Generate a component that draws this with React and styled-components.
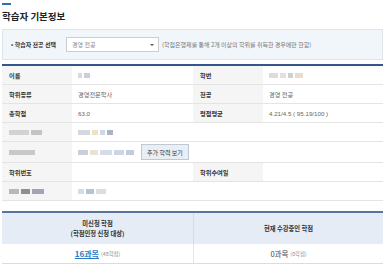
import React from "react";
import styled, { createGlobalStyle } from "styled-components";

const GlobalStyle = createGlobalStyle`
  html, body {
    margin: 0;
    padding: 0;
    background: #fff;
  }
  body {
    font-family: "Noto Sans CJK KR", "Noto Sans", sans-serif;
    color: #333;
  }
`;

const Page = styled.div`
  width: 381px;
  padding: 3px 3px 0 2px;
`;

const TitleMark = styled.div`
  width: 9px;
  height: 2px;
  background: #2f6fb4;
`;

const Title = styled.h1`
  margin: 5px 0 0;
  font-size: 9.5px;
  line-height: 12px;
  font-weight: 700;
  color: #222;
`;

const FilterBox = styled.div`
  margin-top: 7px;
  height: 29px;
  display: flex;
  align-items: center;
  padding-left: 8px;
  background: #f1f6fb;
  border: 1px solid #dde4ec;
`;

const FilterLabel = styled.span`
  font-size: 6px;
  font-weight: 700;
  color: #333;
  width: 55px;
  white-space: nowrap;
`;

const Select = styled.div`
  width: 93px;
  height: 15px;
  box-sizing: border-box;
  display: flex;
  align-items: center;
  justify-content: space-between;
  padding: 0 4px 0 5px;
  background: #fff;
  border: 1px solid #c9ced4;
  font-size: 6px;
  color: #888;
`;

const Arrow = styled.span`
  width: 0;
  height: 0;
  border-left: 2px solid transparent;
  border-right: 2px solid transparent;
  border-top: 2px solid #555;
`;

const Hint = styled.span`
  margin-left: 3px;
  font-size: 6px;
  color: #777;
  white-space: nowrap;
`;

const InfoTable = styled.div`
  margin-top: 4px;
  display: grid;
  grid-template-columns: 70px 121px 70px 120px;
  border-top: 2px solid #34568a;
`;

const Cell = styled.div`
  height: ${(p) => (p.$tall ? 20 : 18)}px;
  display: flex;
  align-items: center;
  gap: 4px;
  padding-left: ${(p) => (p.$label ? 7 : 6)}px;
  border-bottom: 1px solid #e4e4e4;
  background: ${(p) => (p.$label ? "#f5f5f5" : "#fff")};
  grid-column: ${(p) => (p.$span ? "span 3" : "auto")};
  font-size: 6.2px;
  font-weight: ${(p) => (p.$label ? 700 : 400)};
  color: ${(p) => (p.$label ? "#333" : "#666")};
  white-space: nowrap;
`;

const Num = styled.span`
  font-family: "Liberation Sans", "Noto Sans CJK KR", sans-serif;
`;

const MaskRow = styled.span`
  display: flex;
  gap: 2px;
  filter: blur(0.7px);
`;

const MaskBlock = styled.span`
  display: block;
  width: ${(p) => p.$w}px;
  height: 5px;
  background: ${(p) => p.$c};
`;

const Button = styled.button`
  height: 16px;
  padding: 0 5px;
  margin-left: 3px;
  background: #e9eef4;
  border: 1px solid #bfc9d4;
  font-family: inherit;
  font-size: 6px;
  color: #333;
  cursor: pointer;
`;

const Summary = styled.div`
  margin-top: 10px;
  display: grid;
  grid-template-columns: 191px 190px;
  border-top: 2px solid #58749d;
`;

const SumHead = styled.div`
  height: 31px;
  display: flex;
  flex-direction: column;
  align-items: center;
  justify-content: center;
  background: #e5ecf5;
  border-left: ${(p) => (p.$divide ? "1px solid #d3dbe6" : "none")};
  font-size: 6.3px;
  line-height: 10px;
  font-weight: 700;
  color: #333;
`;

const SumCell = styled.div`
  height: 19px;
  display: flex;
  align-items: center;
  justify-content: center;
  gap: 2px;
  border-bottom: 1px solid #dcdcdc;
  border-left: ${(p) => (p.$divide ? "1px solid #e6e6e6" : "none")};
`;

const CountLink = styled.a`
  font-size: 8px;
  font-weight: 700;
  color: #2a79c6;
  text-decoration: underline;
`;

const Count = styled.span`
  font-size: 7.5px;
  color: #444;
`;

const Credit = styled.span`
  font-size: 5.3px;
  color: #888;
`;

const Mask = ({ blocks }) => (
  <MaskRow>
    {blocks.map(([w, c], i) => (
      <MaskBlock key={i} $w={w} $c={c} />
    ))}
  </MaskRow>
);

export default function App() {
  return (
    <Page>
      <GlobalStyle />
      <TitleMark />
      <Title>학습자 기본정보</Title>

      <FilterBox>
        <FilterLabel>• 학습자 전공 선택</FilterLabel>
        <Select>
          경영 전공
          <Arrow />
        </Select>
        <Hint>(학점은행제를 통해 2개 이상의 학위를 취득한 경우에만 한함)</Hint>
      </FilterBox>

      <InfoTable>
        <Cell $label>이름</Cell>
        <Cell>
          <Mask blocks={[[4, "#d9d9d9"], [6, "#c9ced8"]]} />
        </Cell>
        <Cell $label>학번</Cell>
        <Cell>
          <Mask blocks={[[9, "#dcdcdc"], [6, "#e6e0dc"], [5, "#cfcfcf"], [8, "#e7dcd2"]]} />
        </Cell>

        <Cell $label>학위종류</Cell>
        <Cell>경영전문학사</Cell>
        <Cell $label>전공</Cell>
        <Cell>경영 전공</Cell>

        <Cell $label>총학점</Cell>
        <Cell>
          <Num>63.0</Num>
        </Cell>
        <Cell $label>평점평균</Cell>
        <Cell>
          <Num>4.21/4.5 ( 95.19/100 )</Num>
        </Cell>

        <Cell $label>
          <Mask blocks={[[20, "#d2d2d2"], [11, "#c4c4c4"]]} />
        </Cell>
        <Cell $span>
          <Mask blocks={[[12, "#d5d8de"], [6, "#efe2c4"], [5, "#cfd8e6"], [6, "#a9b4c6"]]} />
        </Cell>

        <Cell $label $tall>
          <Mask blocks={[[26, "#c8c8c8"]]} />
        </Cell>
        <Cell $span $tall>
          <Mask blocks={[[10, "#c9ced8"], [8, "#e9e3d2"], [12, "#d6dde9"], [10, "#cdd6e4"], [8, "#c1ccdc"]]} />
          <Button>추가 학력 보기</Button>
        </Cell>

        <Cell $label>학위번호</Cell>
        <Cell />
        <Cell $label>학위수여일</Cell>
        <Cell />

        <Cell $label>
          <Mask blocks={[[10, "#b8b8b8"], [9, "#8f8f8f"], [12, "#a0a6b2"]]} />
        </Cell>
        <Cell $span>
          <Mask blocks={[[6, "#d7dbe2"], [8, "#b6c2d6"], [10, "#d9dde6"]]} />
        </Cell>
      </InfoTable>

      <Summary>
        <SumHead>
          <span>미신청 학점</span>
          <span>(학점인정 신청 대상)</span>
        </SumHead>
        <SumHead $divide>현재 수강중인 학점</SumHead>
        <SumCell>
          <CountLink href="#">16과목</CountLink>
          <Credit>(48학점)</Credit>
        </SumCell>
        <SumCell $divide>
          <Count>0과목</Count>
          <Credit>(0학점)</Credit>
        </SumCell>
      </Summary>
    </Page>
  );
}
